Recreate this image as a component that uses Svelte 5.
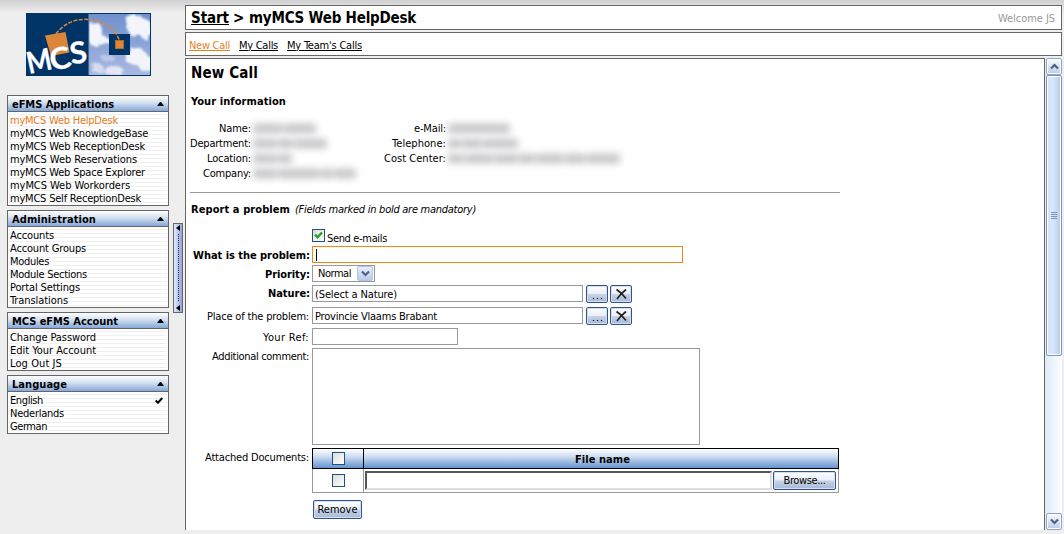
<script>
  const panels = [
    { title: 'eFMS Applications', w: 102, items: [['myMCS Web HelpDesk', 108], ['myMCS Web KnowledgeBase', 138], ['myMCS Web ReceptionDesk', 135], ['myMCS Web Reservations', 127], ['myMCS Web Space Explorer', 135], ['myMCS Web Workorders', 120], ['myMCS Self ReceptionDesk', 131]], active: 0 },
    { title: 'Administration', w: 84, items: [['Accounts', 44], ['Account Groups', 76], ['Modules', 39], ['Module Sections', 77], ['Portal Settings', 70], ['Translations', 58]] },
    { title: 'MCS eFMS Account', w: 106, items: [['Change Password', 86], ['Edit Your Account', 86], ['Log Out JS', 52]] },
    { title: 'Language', w: 55, items: [['English', 33], ['Nederlands', 54], ['German', 37]], checked: 0 }
  ];
  const tabs = [['New Call', 41], ['My Calls', 39], ["My Team's Calls", 75]];
  const left = [
    ['Name', 32, [30, 32]], ['Department', 61, [24, 16, 32]], ['Location', 44, [24, 14]], ['Company', 48, [24, 42, 12, 22]]
  ];
  const right = [
    ['e-Mail', 32, [62]], ['Telephone', 54, [14, 18, 36]], ['Cost Center', 62, [16, 28, 24, 16, 28, 20, 34]]
  ];

  // Tightens or loosens tracking so a label occupies its intended width.
  function fit(node, width) {
    const range = document.createRange();
    range.selectNodeContents(node);
    const natural = range.getBoundingClientRect().width;
    const n = node.textContent.length;
    node.style.letterSpacing = (width - natural) / n + 'px';
  }
</script>

{#snippet chevron(up)}
  <svg width="9" height="7" viewBox="0 0 9 7"><path d={up ? 'M1 5.5 L4.5 2 L8 5.5' : 'M1 1.5 L4.5 5 L8 1.5'} fill="none" stroke="#4d6185" stroke-width="2.2" /></svg>
{/snippet}

{#snippet info(rows)}
  <div class="info">
    {#each rows as [name, w, words]}
      <div class="irow">
        <span class="ilabel"><span use:fit={w}>{name}:</span></span>
        <span class="hidden-value">{#each words as ww}<i style="width:{ww}px"></i>{/each}</span>
      </div>
    {/each}
  </div>
{/snippet}

{#snippet picker(label, w, value, vw, bold)}
  <div class="row picker">
    <label class:bold><span use:fit={w}>{label}</span></label>
    <div class="input mid"><span use:fit={vw}>{value}</span></div>
    <button class="btn small"><span class="dots"><b></b><b></b><b></b></span></button>
    <button class="btn small"><svg width="13" height="12" viewBox="0 0 13 12"><path d="M1.5 1.5 L6 5 L11 10.5 M11 1.5 L6 6 L2 11" fill="none" stroke="#222" stroke-width="1.7" /></svg></button>
  </div>
{/snippet}

<div class="page">
  <aside>
    <svg class="logo" width="125" height="63" viewBox="0 0 125 63">
      <defs>
        <linearGradient id="sky" x1="0" y1="0" x2="0" y2="1"><stop offset="0" stop-color="#6f90cd" /><stop offset="1" stop-color="#a9b8e2" /></linearGradient>
        <filter id="soft" x="-20%" y="-20%" width="140%" height="140%"><feTurbulence type="fractalNoise" baseFrequency=".12" numOctaves="3" seed="4" /><feDisplacementMap in="SourceGraphic" scale="8" /><feGaussianBlur stdDeviation=".8" /></filter>
        <clipPath id="skyclip"><rect x="63" y="1" width="61" height="61" /></clipPath>
      </defs>
      <rect width="125" height="63" fill="#003366" />
      <rect x="63" y="1" width="61" height="61" fill="url(#sky)" />
      <g clip-path="url(#skyclip)">
        <g filter="url(#soft)" fill="#f3f5fb">
          <ellipse cx="69" cy="21" rx="8" ry="12" /><ellipse cx="77" cy="28" rx="7" ry="4" />
          <ellipse cx="114" cy="15" rx="13" ry="10" /><ellipse cx="109" cy="8" rx="9" ry="6" />
          <ellipse cx="110" cy="44" rx="11" ry="9" /><ellipse cx="121" cy="51" rx="9" ry="8" />
          <ellipse cx="71" cy="55" rx="6" ry="5" fill="#d8def1" /><ellipse cx="88" cy="58" rx="10" ry="5" fill="#e4e8f5" /><ellipse cx="82" cy="45" rx="7" ry="3" fill="#bdc8e8" />
        </g>
      </g>
      <path d="M63 1V62" stroke="#7e9bc4" />
      <rect x="83" y="21" width="21" height="21" fill="#003366" />
      <rect x="89.5" y="27.5" width="8" height="8" fill="#db863b" stroke="#a86b38" />
      <path d="M19 22.500L39.500 19L43.500 39.500L25 43Z" fill="#db863b" />
      <path d="M30 21C42 5 60 4 73 9C85 13 91 20 93 27" fill="none" stroke="#db863b" stroke-width="1.500" stroke-dasharray="4 1.500" />
      <g fill="#fff" stroke="#fff" stroke-width=".3" font-family="Lato, sans-serif" font-weight="700" font-size="30">
        <text transform="translate(3 61) rotate(-12)" textLength="25" lengthAdjust="spacingAndGlyphs">M</text>
        <text transform="translate(26 58) rotate(-12)" textLength="21" lengthAdjust="spacingAndGlyphs">C</text>
        <text transform="translate(45.500 51.500) rotate(-9)" textLength="17" lengthAdjust="spacingAndGlyphs">S</text>
      </g>
    </svg>
    {#each panels as p}
      <section class="panel">
        <h3><span use:fit={p.w}>{p.title}</span><svg width="7" height="4" viewBox="0 0 7 4"><path d="M0 4L3 0H4L7 4Z" fill="#000" /></svg></h3>
        <ul>
          {#each p.items as [t, w], i}
            <li class:active={p.active === i}><span use:fit={w}>{t}</span>{#if p.checked === i}<svg width="8" height="7" viewBox="0 0 8 7"><path d="M.7 3.500L3 5.700L7.300 1" fill="none" stroke="#000" stroke-width="2" /></svg>{/if}</li>
          {/each}
        </ul>
      </section>
    {/each}
  </aside>

  <div class="split">
    <svg width="5" height="6"><path d="M4 0V6L0 3Z" /></svg>
    <span></span>
    <svg width="5" height="6"><path d="M4 0V6L0 3Z" /></svg>
  </div>

  <main>
    <header>
      <h1><a href="#start" use:fit={38}>Start</a><span class="gt">&gt;</span><span use:fit={167}>myMCS Web HelpDesk</span></h1>
      <span class="welcome"><span use:fit={57}>Welcome JS</span></span>
    </header>
    <nav>
      {#each tabs as [t, w], i}<a href="#tab" class:active={i === 0} use:fit={w}>{t}</a>{/each}
    </nav>
    <div class="view">
      <div class="content">
        <h2><span use:fit={67}>New Call</span></h2>
        <h4><span use:fit={95}>Your information</span></h4>
        <div class="infos">{@render info(left)}{@render info(right)}</div>
        <hr />
        <h4 class="report"><span use:fit={99}>Report a problem</span><em use:fit={181}>(Fields marked in bold are mandatory)</em></h4>
        <form>
          <div class="row send"><label></label><span class="check big"><svg width="9" height="9" viewBox="0 0 9 9"><path d="M1 3.500L3.500 6.200L8 1.500" fill="none" stroke="#21a121" stroke-width="2.300" /></svg></span><span class="st" use:fit={60}>Send e-mails</span></div>
          <div class="row problem"><label class="bold"><span use:fit={117}>What is the problem:</span></label><div class="input focus"><span class="caret"></span></div></div>
          <div class="row prio"><label class="bold"><span use:fit={45}>Priority:</span></label><div class="select"><span use:fit={33}>Normal</span><span class="drop">{@render chevron(false)}</span></div></div>
          {@render picker('Nature:', 42, '(Select a Nature)', 82, true)}
          {@render picker('Place of the problem:', 102, 'Provincie Vlaams Brabant', 122, false)}
          <div class="row ref"><label><span use:fit={46}>Your Ref:</span></label><div class="input short"></div></div>
          <div class="row comment"><label><span use:fit={97}>Additional comment:</span></label><div class="area"></div></div>
          <div class="row docs">
            <label><span use:fit={104}>Attached Documents:</span></label>
            <div class="table">
              <div class="thead"><div class="c1"><span class="check"></span></div><div class="c2"><span use:fit={55}>File name</span></div></div>
              <div class="tbody"><div class="c1"><span class="check"></span></div><div class="c2"><div class="file"></div><button class="btn browse"><span use:fit={42}>Browse...</span></button></div></div>
            </div>
          </div>
          <div class="row"><label></label><button class="btn remove"><span use:fit={40}>Remove</span></button></div>
        </form>
      </div>
      <div class="scroll">
        <div class="sbtn">{@render chevron(true)}</div>
        <div class="thumb"><i></i><i></i><i></i><i></i></div>
        <div class="track"></div>
        <div class="sbtn">{@render chevron(false)}</div>
      </div>
    </div>
  </main>
</div>

<style>
  :global(body) { margin: 0; background: #eee; }
  * { box-sizing: border-box; }
  .page { width: 1064px; height: 534px; overflow: hidden; display: flex; background: linear-gradient(#d0d0d0, #eee 13px); font: 11px/13px "DejaVu Sans Condensed", "DejaVu Sans", sans-serif; color: #000; white-space: nowrap; }
  h1, h2, h3, h4, ul { margin: 0; padding: 0; list-style: none; }
  a { color: #000; }
  aside { width: 173px; padding: 13px 4px 0 7px; display: flex; flex-direction: column; gap: 4px; }
  .logo { margin: 0 0 15px 19px; flex: none; }
  .panel { border: 1px solid #666; background: #fff; }
  h3 { height: 16px; border-bottom: 1px solid #666; background: linear-gradient(#fff, #d3e0f0 45%, #84a8d8); display: flex; justify-content: space-between; align-items: center; padding: 1px 4px 0 4px; font-size: 11px; line-height: 13px; }
  h3 svg { margin-bottom: 1px; }
  ul { margin: 0 1px; padding: 2px 0 0 1px; background: repeating-linear-gradient(#fff 0 2px, #f0f0f0 2px 3px, #fff 3px 4px); }
  li { height: 13px; display: flex; justify-content: space-between; align-items: center; padding-right: 4px; }
  li.active, nav .active { color: #e87e1c; }
  .split { width: 10px; height: 90px; margin-top: 223px; border: 1px solid #666; background: linear-gradient(90deg, #e6ecfa, #8fa4dc); display: flex; flex-direction: column; align-items: center; padding: 1px 0; }
  .split span { flex: 1; width: 1px; margin: 3px 0; background: repeating-linear-gradient(#223 0 1px, transparent 1px 2px); }
  main { width: 877px; margin: 5px 0 0 2px; }
  header, nav { border: 1px solid #666; background: #fff; display: flex; align-items: center; }
  header { height: 25px; justify-content: space-between; padding: 0 6px 0 5px; }
  h1 { font-size: 15px; line-height: 18px; display: flex; }
  .gt { margin: 0 5px 0 4px; width: 11px; }
  .welcome { color: #999; padding-top: 1px; }
  nav { height: 24px; margin-top: 2px; padding: 2px 0 0 3px; gap: 9px; }
  .view { display: flex; height: 472px; margin-top: 2px; gap: 1px; }
  .content { width: 860px; border: solid #666; border-width: 1px 1px 0; background: #fff; padding: 5px 0 0 5px; }
  h2 { font-size: 15px; line-height: 18px; }
  h4 { font-size: 11px; line-height: 13px; margin-top: 13px; }
  .infos { display: flex; margin: 13px 0 0 -5px; height: 61px; }
  .info { width: 195px; }
  .irow { height: 15px; display: flex; align-items: center; }
  .ilabel { width: 65px; margin-right: 1px; text-align: right; flex: none; }
  .hidden-value { display: flex; gap: 1px; filter: blur(3.5px); padding-left: 1px; }
  .hidden-value i { height: 11px; background: linear-gradient(#dcdcdd, #bfbfc2 50%, #d8d8da); border-radius: 3px; flex: none; }
  hr { width: 650px; height: 1px; border: 0; background: #999; margin: 10px 0 0 -1px; }
  .report { margin-top: 10px; display: flex; }
  em { font-weight: 400; margin-left: 5px; }
  form { padding-top: 13px; }
  .row { display: flex; }
  label { width: 119px; padding-right: 1px; text-align: right; margin-right: 2px; flex: none; }
  label.bold { padding-right: 0; }
  .bold { font-weight: 700; }
  .check { width: 13px; height: 13px; border: 1px solid #1c5180; background: linear-gradient(135deg, #dcdcd7, #fff); display: flex; align-items: center; justify-content: center; flex: none; }
  .send { height: 17px; }
  .st { margin: 3px 0 0 2px; }
  .problem label, .picker label { padding-top: 3px; }
  .input { height: 17px; border: 1px solid #999; padding: 2px 3px; background: #fff; }
  .focus { width: 371px; border-color: #f7860f; }
  .caret { display: block; width: 1px; height: 12px; background: #000; }
  .prio { margin-top: 2px; }
  .prio label { padding-top: 3px; }
  .select { width: 63px; height: 17px; border: 1px solid #999; display: flex; align-items: center; justify-content: space-between; padding: 0 1px 0 5px; }
  .drop { width: 16px; height: 15px; border: 1px solid #b1c4e4; border-radius: 2px; background: linear-gradient(#e7effc, #b7cbea); display: flex; align-items: center; justify-content: center; }
  .picker { margin-top: 3px; height: 19px; }
  .picker label.bold { padding-top: 2px; }
  .mid { width: 271px; margin-right: 3px; padding: 2px 2px; }
  .btn { font: inherit; color: #000; padding: 0; border: 1px solid #31538c; border-radius: 2px; background: linear-gradient(#fff, #e9eef7 48%, #c7d3e6 52%, #a7b9d6); box-shadow: inset 0 0 0 1px #d4e0f2; display: flex; align-items: center; justify-content: center; flex: none; }
  .small { width: 22px; height: 18px; margin-right: 2px; }
  .dots { display: flex; gap: 3px; padding-top: 9px; }
  .dots b { width: 1px; height: 1px; background: #000; box-shadow: 0 0 1px #000; }
  .ref { margin-top: 2px; }
  .ref label { padding-top: 3px; }
  .short { width: 146px; }
  .comment { margin-top: 3px; }
  .comment label { padding-top: 2px; }
  .docs label { padding-top: 3px; }
  .area { width: 388px; height: 97px; border: 1px solid #999; }
  .docs { margin-top: 3px; height: 52px; }
  .table { width: 527px; height: 45px; }
  .thead, .tbody { display: flex; }
  .thead { height: 21px; border: 1px solid #000; background: linear-gradient(#fff, #cddcf0 40%, #6594d0); font-weight: 700; }
  .tbody { height: 24px; border: 1px solid #999; border-top: 0; }
  .c1 { width: 51px; border-right: 1px solid #999; display: flex; justify-content: center; align-items: center; flex: none; }
  .thead .c1 { border-color: #000; }
  .c2 { flex: 1; display: flex; align-items: center; justify-content: center; }
  .thead .c2 { padding: 2px 0 0 3px; }
  .tbody .c2 { justify-content: flex-start; padding-left: 1px; gap: 1px; }
  .file { width: 407px; height: 19px; border: 2px solid; border-color: #555 #ddd #ddd #555; }
  .browse { width: 63px; height: 19px; }
  .remove { width: 49px; height: 19px; margin-left: 1px; }
  .scroll { width: 16px; display: flex; flex-direction: column; background: linear-gradient(90deg, #deebfc, #fdfeff); }
  .sbtn { height: 17px; border: 1px solid #8ba3c4; border-radius: 2px; background: linear-gradient(#f8fbff, #b9cce8); box-shadow: inset 0 0 0 1px #fff; display: flex; align-items: center; justify-content: center; flex: none; }
  .thumb { height: 281px; border: 1px solid #8096b8; border-radius: 2px; background: linear-gradient(90deg, #d5e5fb, #d5e5fb 45%, #b5c9e6); box-shadow: inset 0 0 0 1px #fff; display: flex; flex-direction: column; align-items: center; justify-content: center; gap: 1px; }
  .thumb i { width: 6px; height: 1px; background: #7b93b5; }
  .track { flex: 1; }
</style>
